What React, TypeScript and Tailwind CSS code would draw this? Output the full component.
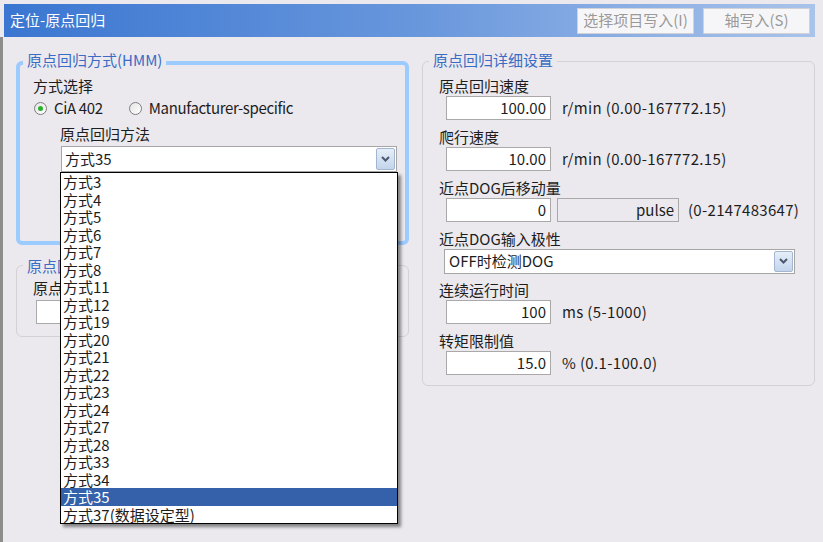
import React from 'react'

const methods = [
  '方式3', '方式4', '方式5', '方式6', '方式7', '方式8', '方式11', '方式12', '方式19', '方式20',
  '方式21', '方式22', '方式23', '方式24', '方式27', '方式28', '方式33', '方式34', '方式35', '方式37(数据设定型)',
]

function Chevron() {
  return (
    <svg width="11" height="8" viewBox="0 0 11 8">
      <path d="M2 2 L5.5 5.5 L9 2" fill="none" stroke="#4b5870" strokeWidth="2" />
    </svg>
  )
}

function ArrowButton() {
  return (
    <div className="w-[19px] self-stretch my-[1px] mr-[1px] flex items-center justify-center rounded-[2px] border border-[#a4b6cf] bg-gradient-to-b from-[#e6eef8] to-[#c3d5ec]">
      <Chevron />
    </div>
  )
}

function Radio({ checked, label }: { checked?: boolean; label: string }) {
  return (
    <div className="flex items-center gap-[7px]">
      <div className="w-[13px] h-[13px] rounded-full border border-[#7d7d7d] bg-gradient-to-br from-[#e4e4e4] to-white flex items-center justify-center">
        {checked && <div className="w-[5px] h-[5px] rounded-full bg-[#28b22c]" />}
      </div>
      <span className="tracking-[-0.35px]">{label}</span>
    </div>
  )
}

function NumBox({ value }: { value: string }) {
  return (
    <div className="w-[105px] h-[24px] bg-white border border-[#a9a9a9] flex items-center justify-end pr-[4px]">
      {value}
    </div>
  )
}

function Row({ label, children }: { label: string; children: React.ReactNode }) {
  return (
    <div className="flex flex-col">
      <div className="h-[21px] leading-[21px]">{label}</div>
      <div className="flex items-center pl-[7px] h-[24px]">{children}</div>
    </div>
  )
}

export default function App() {
  return (
    <div className="w-[823px] h-[542px] bg-[#ebe9ee] text-[15px] text-[#1d1d1d] font-['Noto_Sans_CJK_SC','Noto_Sans',sans-serif] overflow-hidden">
      {/* Title bar */}
      <div className="pt-1 pl-1">
        <div className="w-[811px] h-[33px] flex items-center justify-between pl-[6px] pr-[5px] bg-gradient-to-r from-[#3a76d1] via-[#6796dc] to-[#a9c3ea]">
          <span className="text-white">定位-原点回归</span>
          <div className="flex gap-[9px]">
            <button className="w-[117px] h-[26px] bg-[#f6f6f8] border border-[#d2d2d6] text-[#9a9a9a]">选择项目写入(I)</button>
            <button className="w-[107px] h-[26px] bg-[#f6f6f8] border border-[#d2d2d6] text-[#9a9a9a]">轴写入(S)</button>
          </div>
        </div>
      </div>

      <div className="flex gap-[13px] pl-[13px] pt-[14px] h-[505px] border-l-[3px] border-[#8d8d8d]">
        {/* Left column */}
        <div className="w-[393px] flex flex-col">
          <fieldset className="border-4 border-[#9ccbff] rounded-md">
            <legend className="ml-[3px] px-[4px] leading-[18px] pb-[6px] text-[#3a6cc4]">原点回归方式(HMM)</legend>
            <div className="pl-[13px] pb-[69px]">
              <div className="mt-[1px] h-[20px] leading-[20px]">方式选择</div>
              <div className="mt-[2px] h-[20px] flex items-center gap-[26px] pl-[1px]">
                <Radio checked label="CiA 402" />
                <Radio label="Manufacturer-specific" />
              </div>
              <div className="mt-[6px] pl-[27px]">
                <div className="h-[20px] leading-[20px]">原点回归方法</div>
                <div className="relative mt-[2px] w-[336px] ml-[1px]">
                  <div className="h-[26px] bg-white border border-[#a6a6a6] flex items-stretch">
                    <div className="flex-1 flex items-center pl-[3px]">方式35</div>
                    <ArrowButton />
                  </div>
                  {/* Open list */}
                  <div className="absolute z-10 top-full left-[-1px] w-[338px] bg-white border border-black shadow-[3px_3px_3px_rgba(0,0,0,0.45)]">
                    {methods.map((m) => (
                      <div
                        key={m}
                        className={`h-[17.5px] leading-[17.5px] pl-[2px] ${m === '方式35' ? 'bg-[#3461a9] text-white' : ''}`}
                      >
                        {m}
                      </div>
                    ))}
                  </div>
                </div>
              </div>
            </div>
          </fieldset>

          <fieldset className="mt-[10px] border border-[#d3d1d6] rounded-md">
            <legend className="ml-[6px] px-[4px] leading-[18px] pt-[2px] text-[#3a6cc4]">原点回归偏移设置</legend>
            <div className="pl-[16px] pb-[12px]">
              <div className="mt-[3px] h-[20px] leading-[20px]">原点回归偏移量</div>
              <div className="mt-[2px] pl-[3px]">
                <NumBox value="0" />
              </div>
            </div>
          </fieldset>
        </div>

        {/* Right column */}
        <fieldset className="w-[393px] self-start border border-[#d3d1d6] rounded-md">
          <legend className="ml-[6px] px-[4px] leading-[18px] pb-[3px] text-[#3a6cc4]">原点回归详细设置</legend>
          <div className="mt-[3px] pl-[16px] pb-[10px] flex flex-col gap-[6px]">
            <Row label="原点回归速度">
              <NumBox value="100.00" />
              <span className="ml-[11px] tracking-[0.35px]">r/min (0.00-167772.15)</span>
            </Row>
            <Row label="爬行速度">
              <NumBox value="10.00" />
              <span className="ml-[11px] tracking-[0.35px]">r/min (0.00-167772.15)</span>
            </Row>
            <Row label="近点DOG后移动量">
              <NumBox value="0" />
              <div className="ml-[6px] w-[122px] h-[24px] border border-[#a9a9a9] flex items-center justify-end pr-[4px]">pulse</div>
              <span className="ml-[9px] tracking-[0.3px]">(0-2147483647)</span>
            </Row>
            <Row label="近点DOG输入极性">
              <div className="-ml-[2px] w-[351px] h-[25px] bg-white border border-[#a6a6a6] flex items-stretch">
                <div className="flex-1 flex items-center pl-[4px]">OFF时检测DOG</div>
                <ArrowButton />
              </div>
            </Row>
            <Row label="连续运行时间">
              <NumBox value="100" />
              <span className="ml-[11px] tracking-[0.35px]">ms (5-1000)</span>
            </Row>
            <Row label="转矩限制值">
              <NumBox value="15.0" />
              <span className="ml-[11px] tracking-[0.35px]">% (0.1-100.0)</span>
            </Row>
          </div>
        </fieldset>
      </div>
    </div>
  )
}
